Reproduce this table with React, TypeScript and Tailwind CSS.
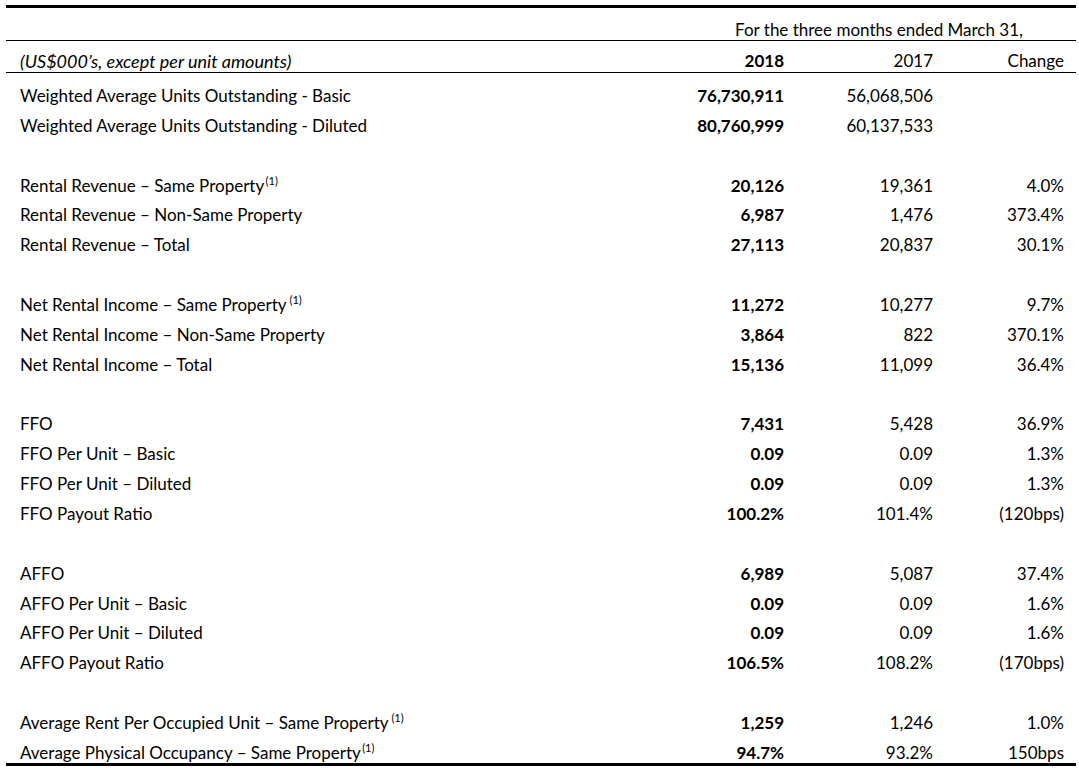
import React from "react";

type Row = { label?: string; sup?: boolean; supSpace?: boolean; a?: string; b?: string; c?: string } | null;

const rows: Row[] = [
  { label: "Weighted Average Units Outstanding - Basic", a: "76,730,911", b: "56,068,506", c: "" },
  { label: "Weighted Average Units Outstanding - Diluted", a: "80,760,999", b: "60,137,533", c: "" },
  null,
  { label: "Rental Revenue – Same Property", sup: true, a: "20,126", b: "19,361", c: "4.0%" },
  { label: "Rental Revenue – Non-Same Property", a: "6,987", b: "1,476", c: "373.4%" },
  { label: "Rental Revenue – Total", a: "27,113", b: "20,837", c: "30.1%" },
  null,
  { label: "Net Rental Income – Same Property", sup: true, supSpace: true, a: "11,272", b: "10,277", c: "9.7%" },
  { label: "Net Rental Income – Non-Same Property", a: "3,864", b: "822", c: "370.1%" },
  { label: "Net Rental Income – Total", a: "15,136", b: "11,099", c: "36.4%" },
  null,
  { label: "FFO", a: "7,431", b: "5,428", c: "36.9%" },
  { label: "FFO Per Unit – Basic", a: "0.09", b: "0.09", c: "1.3%" },
  { label: "FFO Per Unit – Diluted", a: "0.09", b: "0.09", c: "1.3%" },
  { label: "FFO Payout Ratio", a: "100.2%", b: "101.4%", c: "(120bps)" },
  null,
  { label: "AFFO", a: "6,989", b: "5,087", c: "37.4%" },
  { label: "AFFO Per Unit – Basic", a: "0.09", b: "0.09", c: "1.6%" },
  { label: "AFFO Per Unit – Diluted", a: "0.09", b: "0.09", c: "1.6%" },
  { label: "AFFO Payout Ratio", a: "106.5%", b: "108.2%", c: "(170bps)" },
  null,
  { label: "Average Rent Per Occupied Unit – Same Property", sup: true, supSpace: true, a: "1,259", b: "1,246", c: "1.0%" },
  { label: "Average Physical Occupancy – Same Property", sup: true, a: "94.7%", b: "93.2%", c: "150bps" },
];

export default function App() {
  return (
    <div
      className="w-[1079px] h-[770px] bg-white text-black overflow-hidden pt-[5px] pl-[6px]"
      style={{ fontFamily: "Lato, 'Open Sans', sans-serif" }}
    >
      <div className="w-[1070px] border-t-[3px] border-b-[3px] border-black text-[17px]">
        <div className="h-[33px] flex items-end border-b border-black pb-[1px]">
          <div className="ml-[676px] flex-1 text-center leading-[18px]">
            For the three months ended March 31,
          </div>
        </div>
        <div className="h-[32px] flex items-end border-b border-black pr-[12px] pb-[2px]">
          <div className="flex-1 pl-[14px] italic text-[18px] leading-[18px]">(US$000’s, except per unit amounts)</div>
          <div className="w-[150px] text-right font-bold leading-[18px]">2018</div>
          <div className="w-[149px] text-right leading-[18px]">2017</div>
          <div className="w-[131px] text-right leading-[18px]">Change</div>
        </div>
        <div className="pt-[8px]">
          {rows.map((r, i) => {
            const last = i === rows.length - 1;
            if (!r) return <div key={i} className="h-[29.86px]" />;
            return (
              <div
                key={i}
                className={
                  last
                    ? "h-[25px] flex items-start pt-[5px] pr-[12px] leading-[20px]"
                    : "h-[29.86px] flex items-center pr-[12px] leading-[20px]"
                }
              >
                <div className="flex-1 pl-[14px] whitespace-nowrap">
                  {r.label}
                  {r.sup && (
                    <sup className="text-[11px] relative -top-[7px]">
                      {r.supSpace ? "\u00a0" : "\u2009"}(1)
                    </sup>
                  )}
                </div>
                <div className="w-[150px] text-right font-bold">{r.a}</div>
                <div className="w-[149px] text-right">{r.b}</div>
                <div className="w-[131px] text-right">{r.c}</div>
              </div>
            );
          })}
        </div>
      </div>
    </div>
  );
}
